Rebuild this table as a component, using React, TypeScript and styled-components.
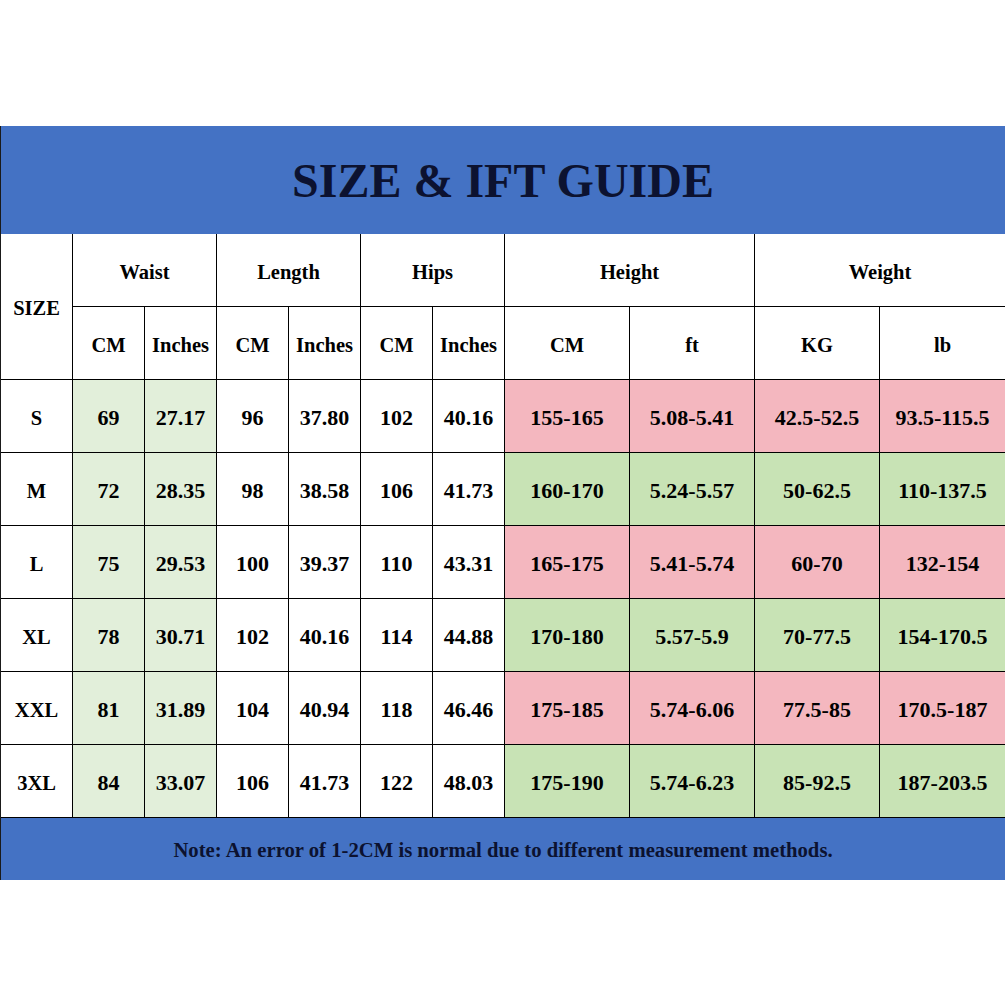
import React from "react";
import styled, { createGlobalStyle } from "styled-components";

const Global = createGlobalStyle`
  html, body { margin: 0; padding: 0; background: #ffffff; }
  body { font-family: "Liberation Serif", "Times New Roman", serif; }
`;

const Page = styled.div`
  width: 1005px;
  padding-top: 126px;
`;

const Chart = styled.div`
  border-left: 1px solid #1a1a1a;
`;

const Banner = styled.div<{ $h: number; $size: number; $nudge?: number }>`
  height: ${(p) => p.$h}px;
  box-sizing: border-box;
  padding-top: ${(p) => p.$nudge || 0}px;
  background: #4472c4;
  display: flex;
  align-items: center;
  justify-content: center;
  font-weight: 700;
  font-size: ${(p) => p.$size}px;
  color: #0c1230;
`;

const Grid = styled.div`
  display: grid;
  grid-template-columns: repeat(7, 71px) repeat(3, 124px) 1fr;
  grid-auto-rows: 72px;
  gap: 1px;
  background: #000;
  padding-bottom: 1px;
`;

type Tone = "white" | "light" | "green" | "pink";
const tones: Record<Tone, string> = {
  white: "#ffffff",
  light: "#e2efda",
  green: "#c8e3b5",
  pink: "#f4b7bf",
};

const Cell = styled.div<{ $tone?: Tone; $col?: number; $row?: number; $data?: boolean }>`
  background: ${(p) => tones[p.$tone || "white"]};
  display: flex;
  align-items: center;
  justify-content: center;
  box-sizing: border-box;
  padding-top: 4px;
  font-weight: 700;
  font-size: ${(p) => (p.$data ? 22 : 20.5)}px;
  color: #000;
  grid-column: span ${(p) => p.$col || 1};
  grid-row: span ${(p) => p.$row || 1};
`;

const groups = ["Waist", "Length", "Hips", "Height", "Weight"];
const subs = ["CM", "Inches", "CM", "Inches", "CM", "Inches", "CM", "ft", "KG", "lb"];

const rows: string[][] = [
  ["S", "69", "27.17", "96", "37.80", "102", "40.16", "155-165", "5.08-5.41", "42.5-52.5", "93.5-115.5"],
  ["M", "72", "28.35", "98", "38.58", "106", "41.73", "160-170", "5.24-5.57", "50-62.5", "110-137.5"],
  ["L", "75", "29.53", "100", "39.37", "110", "43.31", "165-175", "5.41-5.74", "60-70", "132-154"],
  ["XL", "78", "30.71", "102", "40.16", "114", "44.88", "170-180", "5.57-5.9", "70-77.5", "154-170.5"],
  ["XXL", "81", "31.89", "104", "40.94", "118", "46.46", "175-185", "5.74-6.06", "77.5-85", "170.5-187"],
  ["3XL", "84", "33.07", "106", "41.73", "122", "48.03", "175-190", "5.74-6.23", "85-92.5", "187-203.5"],
];

function toneFor(rowIdx: number, colIdx: number): Tone {
  if (colIdx === 1 || colIdx === 2) return "light";
  if (colIdx >= 7) return rowIdx % 2 === 0 ? "pink" : "green";
  return "white";
}

export default function App() {
  return (
    <Page>
      <Global />
      <Chart>
        <Banner $h={108} $size={48}>SIZE &amp; IFT GUIDE</Banner>
        <Grid>
          <Cell $row={2}>SIZE</Cell>
          {groups.map((g) => (
            <Cell key={g} $col={2}>
              {g}
            </Cell>
          ))}
          {subs.map((s, i) => (
            <Cell key={i}>{s}</Cell>
          ))}
          {rows.map((r, ri) =>
            r.map((v, ci) => (
              <Cell key={`${ri}-${ci}`} $tone={toneFor(ri, ci)} $data={ci > 0}>
                {v}
              </Cell>
            ))
          )}
        </Grid>
        <Banner $h={62} $size={20.7} $nudge={2}>
          Note: An error of 1-2CM is normal due to different measurement methods.
        </Banner>
      </Chart>
    </Page>
  );
}
